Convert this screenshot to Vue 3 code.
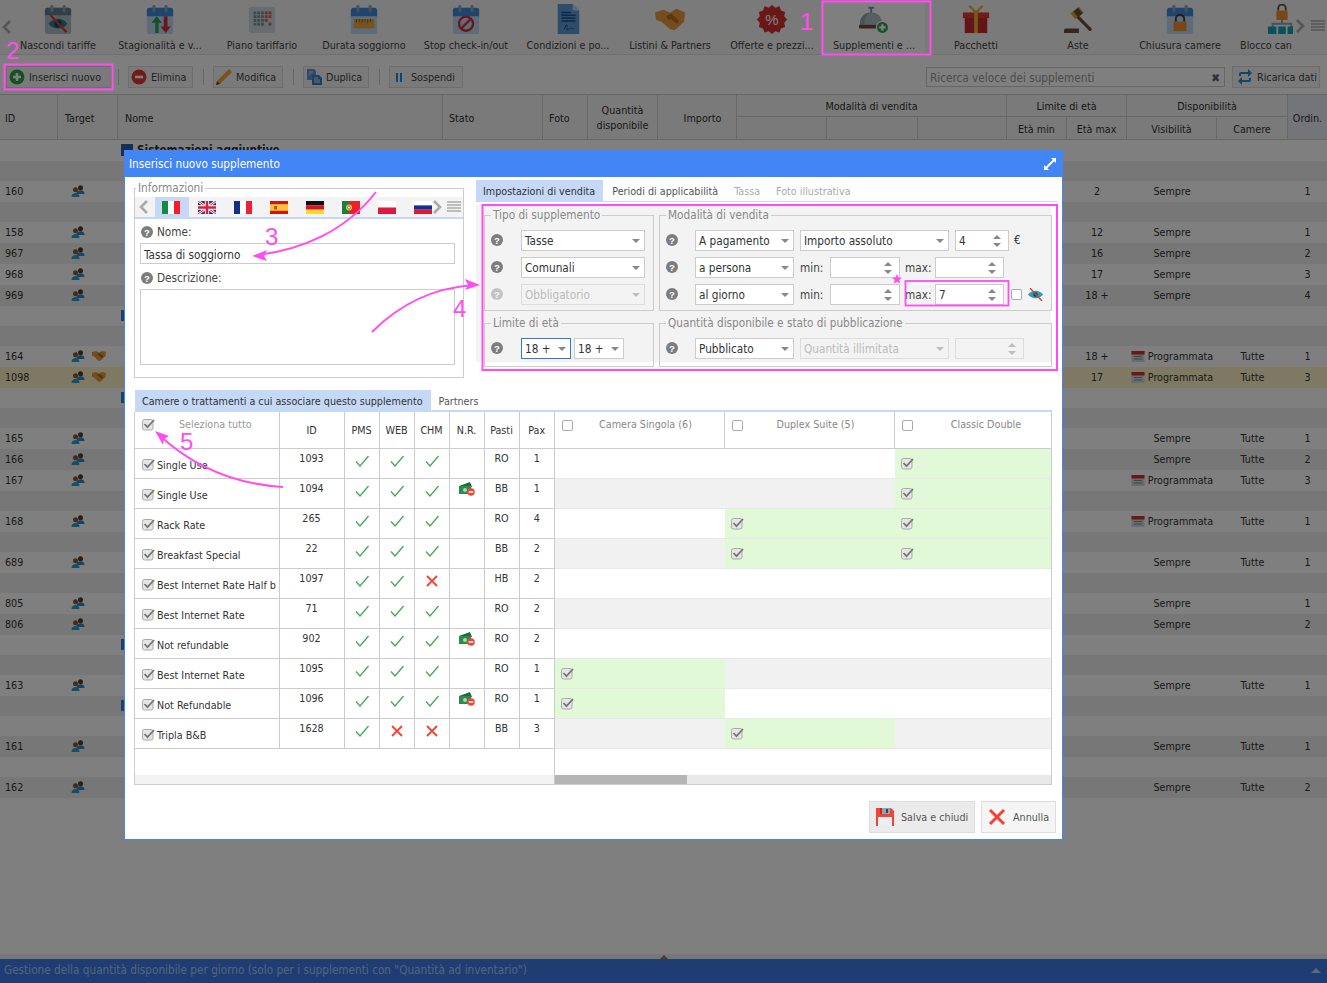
<template>
  <div class="page">
    <!-- icon sprite -->
    <svg class="sprite" aria-hidden="true">
      <defs>
        <symbol id="cal" viewBox="0 0 32 32">
          <rect x="2" y="4" width="28" height="28" rx="3" fill="#bcd9f5" />
          <path d="M2 13V7a3 3 0 0 1 3-3h22a3 3 0 0 1 3 3v6z" fill="#3d8bdc" />
          <rect x="8" y="1" width="3" height="8" rx="1.5" fill="#90a4ae" />
          <rect x="21" y="1" width="3" height="8" rx="1.5" fill="#90a4ae" />
        </symbol>
        <symbol id="i-hide" viewBox="0 0 32 32">
          <rect x="2" y="4" width="28" height="28" rx="3" fill="#b0bec5" />
          <path d="M2 12V7a3 3 0 0 1 3-3h22a3 3 0 0 1 3 3v5z" fill="#607d8b" />
          <rect x="8" y="1" width="3" height="8" rx="1.5" fill="#90a4ae" />
          <rect x="21" y="1" width="3" height="8" rx="1.5" fill="#90a4ae" />
          <path d="M6 21c5-7 15-7 20 0-5 7-15 7-20 0z" fill="#2b7f8e" />
          <circle cx="16" cy="21" r="4" fill="#0d4d5c" />
          <path d="M8 12l17 18" stroke="#e53935" stroke-width="2.4" />
        </symbol>
        <symbol id="i-stag" viewBox="0 0 32 32">
          <use href="#cal" width="32" height="32" />
          <path d="M11 31V20H7l5.500-7 5.500 7h-3.500v11z" fill="#2e9e4f" />
          <path d="M20 13v11h-3.500l5.500 7 5.500-7H24V13z" fill="#d32f2f" />
        </symbol>
        <symbol id="i-grid" viewBox="0 0 32 32">
          <rect x="2" y="3" width="28" height="28" rx="3" fill="#cfd8dc" />
          <g fill="#78909c">
            <rect x="7" y="8" width="3" height="3" /><rect x="11" y="8" width="3" height="3" /><rect x="15" y="8" width="3" height="3" />
            <rect x="7" y="12" width="3" height="3" /><rect x="11" y="12" width="3" height="3" /><rect x="15" y="12" width="3" height="3" />
            <rect x="7" y="16" width="3" height="3" /><rect x="11" y="16" width="3" height="3" /><rect x="15" y="16" width="3" height="3" />
            <rect x="7" y="20" width="3" height="3" /><rect x="11" y="20" width="3" height="3" /><rect x="15" y="20" width="3" height="3" />
          </g>
          <g fill="#d9605a">
            <rect x="19" y="8" width="3" height="3" /><rect x="23" y="8" width="3" height="3" />
            <rect x="19" y="12" width="3" height="3" /><rect x="23" y="12" width="3" height="3" />
            <rect x="19" y="16" width="3" height="3" /><rect x="23" y="20" width="3" height="3" />
          </g>
        </symbol>
        <symbol id="i-dur" viewBox="0 0 32 32">
          <use href="#cal" width="32" height="32" />
          <rect x="5" y="16" width="22" height="10" fill="#f2a63a" />
          <path d="M8 16v4M11 16v3M14 16v4M17 16v3M20 16v4M23 16v3" stroke="#8a5a12" stroke-width="1" />
        </symbol>
        <symbol id="i-stop" viewBox="0 0 32 32">
          <use href="#cal" width="32" height="32" />
          <circle cx="16" cy="21" r="7.500" fill="none" stroke="#d32f2f" stroke-width="2.500" />
          <path d="M11 26l10-10" stroke="#d32f2f" stroke-width="2.500" />
        </symbol>
        <symbol id="i-doc" viewBox="0 0 32 32">
          <path d="M5 0h16l7 7v25H5z" fill="#5b9bd5" />
          <path d="M21 0l7 7h-7z" fill="#b7d6f2" />
          <path d="M9 9h10M9 12h15M9 15h15M9 18h15" stroke="#1b4f8c" stroke-width="1.600" />
          <path d="M12 27c2-6 4-6 3-2s2 2 3 1 2 1 4 0" fill="none" stroke="#1b4f8c" stroke-width="1" />
        </symbol>
        <symbol id="i-hands" viewBox="0 0 32 32">
          <path d="M0 9l9-3 7 3 7-4 9 4-1 10-10 9-5-1-9-8-6-2z" fill="#e89a3c" />
          <path d="M12 13l5-3 9 8-3 3-6-5-3 1z" fill="#b96f1e" />
        </symbol>
        <symbol id="i-offer" viewBox="0 0 32 32">
          <path d="M16 1l3.500 3 4.500-1.500 1.500 4.500 4.500 1.500-1 4.500 3 3.500-3 3.500 1 4.500-4.500 1.500-1.500 4.500-4.500-1.500-3.500 3-3.500-3-4.500 1.500-1.500-4.500-4.500-1.500 1-4.500-3-3.500 3-3.500-1-4.500 4.500-1.500 1.500-4.500 4.500 1.500z" fill="#d32f2f" />
          <text x="16" y="22" font-size="16" fill="#fff" text-anchor="middle" font-family="Liberation Sans, sans-serif">%</text>
        </symbol>
        <symbol id="i-bell" viewBox="0 0 32 32">
          <rect x="10" y="3" width="6" height="2" fill="#78909c" />
          <rect x="12" y="4" width="2" height="6" fill="#78909c" />
          <path d="M1 22C1 14 6 9 13 9s12 5 12 13z" fill="#b0bec5" />
          <path d="M1 22C1 14 6 9 12 9c-5 3-6 7-6 13z" fill="#90a4ae" />
          <rect x="0" y="22" width="26" height="4" rx="1" fill="#6d4c41" />
          <circle cx="25" cy="25" r="7" fill="#fff" />
          <circle cx="25" cy="25" r="5.800" fill="#2e9e4f" />
          <path d="M25 21.500v7M21.500 25h7" stroke="#fff" stroke-width="2.400" />
        </symbol>
        <symbol id="i-gift" viewBox="0 0 32 32">
          <rect x="4" y="10" width="24" height="21" fill="#c62828" />
          <rect x="2" y="9" width="28" height="6" fill="#e53935" />
          <rect x="14" y="9" width="4" height="22" fill="#e8b23a" />
          <path d="M16 9L9 2M16 9l7-7" stroke="#e8b23a" stroke-width="2.500" />
        </symbol>
        <symbol id="i-gavel" viewBox="0 0 32 32">
          <path d="M15 13L29 27" stroke="#6d4c41" stroke-width="3.500" stroke-linecap="round" />
          <path d="M8 10l9-7 5 6-9 7z" fill="#d4a72c" />
          <path d="M11 8l5-4 5 6-5 4z" fill="#6d4c41" />
          <path d="M3 26h14v5H1c0-3 0-5 2-5z" fill="#6d4c41" />
        </symbol>
        <symbol id="i-lock" viewBox="0 0 32 32">
          <use href="#cal" width="32" height="32" />
          <path d="M11.500 19v-3a4.500 4.500 0 0 1 9 0v3" fill="none" stroke="#4e342e" stroke-width="2" />
          <rect x="9" y="19" width="14" height="10" rx="1" fill="#ef8f2b" />
        </symbol>
        <symbol id="i-block" viewBox="0 0 32 32">
          <path d="M12 7V4.500a4 4 0 0 1 8 0V7" fill="none" stroke="#6d4c41" stroke-width="2" />
          <rect x="10" y="7" width="12" height="10" rx="1" fill="#ef8f2b" />
          <path d="M16 17v4M6 25v-4h20v4" fill="none" stroke="#90a4ae" stroke-width="2" />
          <rect x="1" y="24" width="9" height="8" fill="#11a3b8" />
          <rect x="12" y="24" width="8" height="8" fill="#11a3b8" />
          <rect x="22" y="24" width="9" height="8" fill="#11a3b8" />
        </symbol>
        <symbol id="i-plus" viewBox="0 0 16 16">
          <circle cx="8" cy="8" r="7.500" fill="#2e9e4f" />
          <path d="M8 4v8M4 8h8" stroke="#fff" stroke-width="2.600" />
        </symbol>
        <symbol id="i-minus" viewBox="0 0 16 16">
          <circle cx="8" cy="8" r="7.500" fill="#e53935" />
          <path d="M4 8h8" stroke="#fff" stroke-width="2.600" />
        </symbol>
        <symbol id="i-pencil" viewBox="0 0 16 16">
          <path d="M13 0l3 3L4 15l-4 1 1-4z" fill="#f2a63a" />
          <path d="M1 12l3 3-4 1z" fill="#6d4c41" />
        </symbol>
        <symbol id="i-copy" viewBox="0 0 16 16">
          <path d="M1 0h7l2 2v9H1z" fill="#5b9bd5" />
          <path d="M6 6h7l3 3v7H6z" fill="#3d7fc1" />
          <path d="M8 9h4M8 11h6M8 13h6M3 3h4M3 5h2" stroke="#dbe9f7" stroke-width="1" />
        </symbol>
        <symbol id="i-reload" viewBox="0 0 16 16">
          <path d="M2 7V5a2 2 0 0 1 2-2h7V0l4 4-4 4V5H4v2z" fill="#2b86d4" />
          <path d="M14 9v2a2 2 0 0 1-2 2H5v3l-4-4 4-4v3h7V9z" fill="#2b86d4" />
        </symbol>
        <symbol id="check" viewBox="0 0 13 13">
          <rect x="0.500" y="1.500" width="10.500" height="10.500" rx="2" fill="#e6e6e6" stroke="#aaa" />
          <path d="M2.500 6l3 3.200L12 2" fill="none" stroke="#777" stroke-width="1.800" />
        </symbol>
        <symbol id="ok" viewBox="0 0 14 12">
          <path d="M1 6.500l4 4.500L13.500 1" fill="none" stroke="#43a855" stroke-width="1.300" />
        </symbol>
        <symbol id="no" viewBox="0 0 12 12">
          <path d="M1 1l10 10M11 1L1 11" stroke="#f44336" stroke-width="1.800" />
        </symbol>
        <symbol id="money" viewBox="0 0 16 14">
          <path d="M0 4l11-4 2 5L2 9z" fill="#1b6e3a" />
          <rect x="0" y="4" width="12" height="8" fill="#2e8b4f" />
          <circle cx="6" cy="8" r="2" fill="#a6d8b3" />
          <circle cx="12" cy="10" r="3.800" fill="#f44336" />
          <path d="M9.800 10h4.400" stroke="#fff" stroke-width="1.600" />
        </symbol>
        <symbol id="help" viewBox="0 0 12 12">
          <circle cx="6" cy="6" r="6" fill="#7d7d7d" />
          <text x="6" y="9.500" font-size="9.500" font-weight="700" fill="#fff" text-anchor="middle" font-family="Liberation Sans, sans-serif">?</text>
        </symbol>
        <symbol id="people" viewBox="0 0 14 12">
          <circle cx="9.500" cy="2.800" r="2.500" fill="#5b3a1e" />
          <path d="M5.500 9c0-3 2-3.800 4-3.800s4 .8 4 3.800z" fill="#2b86d4" />
          <circle cx="4.500" cy="4.800" r="2.500" fill="#8a5a2b" />
          <path d="M.5 12c0-3 2-4 4-4s4 1 4 4z" fill="#2b9fd4" />
        </symbol>
        <symbol id="shake" viewBox="0 0 14 10">
          <path d="M0 1l4-1 3 1.500L10 0l4 1-.5 4L8 10 6 9.500 2 5.500 0 5z" fill="#e89a3c" />
          <path d="M5 3l2.500-1 4 3.500-1.500 1.500-3-2.500z" fill="#a8651a" />
        </symbol>
        <symbol id="planned" viewBox="0 0 14 12">
          <rect x="0.500" y="1" width="13" height="11" fill="#cfd8dc" />
          <rect x="0.500" y="1" width="13" height="3.500" fill="#d32f2f" />
          <path d="M3 6.500h8M3 9h8" stroke="#78909c" />
        </symbol>
        <symbol id="eye-off" viewBox="0 0 17 13">
          <path d="M1 6.500c4-5 11-5 15 0-4 5-11 5-15 0z" fill="#2b9fb3" />
          <circle cx="8.500" cy="6.500" r="2.300" fill="#0d4d5c" />
          <path d="M3 0l12 13" stroke="#e53935" stroke-width="1.300" />
        </symbol>
        <symbol id="f-it" viewBox="0 0 18 13"><rect width="6" height="13" fill="#14893f" /><rect x="6" width="6" height="13" fill="#fff" /><rect x="12" width="6" height="13" fill="#f11e2b" /></symbol>
        <symbol id="f-uk" viewBox="0 0 18 13">
          <rect width="18" height="13" fill="#26327a" />
          <path d="M0 0l18 13M18 0L0 13" stroke="#fff" stroke-width="2.600" />
          <path d="M0 0l18 13M18 0L0 13" stroke="#d5213a" stroke-width="1" />
          <path d="M9 0v13M0 6.500h18" stroke="#fff" stroke-width="4.400" />
          <path d="M9 0v13M0 6.500h18" stroke="#d5213a" stroke-width="2.600" />
        </symbol>
        <symbol id="f-fr" viewBox="0 0 18 13"><rect width="6" height="13" fill="#16307f" /><rect x="6" width="6" height="13" fill="#fff" /><rect x="12" width="6" height="13" fill="#f01f36" /></symbol>
        <symbol id="f-es" viewBox="0 0 18 13"><rect width="18" height="13" fill="#c8171f" /><rect y="3.200" width="18" height="6.600" fill="#fcc42e" /><rect x="4" y="5" width="3" height="3.500" fill="#b6562b" /></symbol>
        <symbol id="f-de" viewBox="0 0 18 13"><rect width="18" height="4.400" fill="#111" /><rect y="4.400" width="18" height="4.300" fill="#d9141e" /><rect y="8.700" width="18" height="4.300" fill="#fdd835" /></symbol>
        <symbol id="f-pt" viewBox="0 0 18 13"><rect width="18" height="13" fill="#f01f24" /><rect width="7" height="13" fill="#1b7f3a" /><circle cx="7" cy="6.500" r="3" fill="#f4c63d" /><circle cx="7" cy="6.500" r="1.500" fill="#fff" stroke="#1d3f96" stroke-width=".6" /></symbol>
        <symbol id="f-pl" viewBox="0 0 18 13"><rect width="18" height="6.500" fill="#fff" /><rect y="6.500" width="18" height="6.500" fill="#dd1a3d" /></symbol>
        <symbol id="f-ru" viewBox="0 0 18 13"><rect width="18" height="4.400" fill="#fff" /><rect y="4.400" width="18" height="4.300" fill="#0f2f96" /><rect y="8.700" width="18" height="4.300" fill="#e21a2d" /></symbol>
        <symbol id="list" viewBox="0 0 14 12"><path d="M0 1h14M0 4h14M0 7h14M0 10h14" stroke="#aaa" stroke-width="1.500" /></symbol>
        <symbol id="chev-l" viewBox="0 0 10 14"><path d="M8 1L2 7l6 6" fill="none" stroke="#aaa" stroke-width="2.600" /></symbol>
        <symbol id="chev-r" viewBox="0 0 10 14"><path d="M2 1l6 6-6 6" fill="none" stroke="#aaa" stroke-width="2.600" /></symbol>
      </defs>
    </svg>

    <!-- page behind the dialog -->
    <div class="app">
      <div class="toolbar">
        <svg class="nav-left"><use href="#chev-l" /></svg>
        <div class="tools">
          <div v-for="t in tools" :key="t.label" class="tool" :class="{ active: t.active }">
            <svg class="tool-ico" viewBox="0 0 32 32"><use :href="'#' + t.icon" /></svg>
            <span class="tool-label">{{ t.label }}</span>
          </div>
        </div>
        <svg class="nav-right"><use href="#chev-r" /></svg>
        <svg class="nav-list"><use href="#list" /></svg>
      </div>

      <div class="actions">
        <template v-for="(a, i) in actions" :key="a.label">
          <span v-if="i" class="sep"></span>
          <button class="btn" :style="{ width: a.w + 'px' }">
            <svg v-if="a.icon" class="btn-ico"><use :href="'#' + a.icon" /></svg>
            <span v-else class="pause"></span>
            {{ a.label }}
          </button>
        </template>
        <div class="search">Ricerca veloce dei supplementi<span class="search-x">✖</span></div>
        <button class="btn reload"><svg class="btn-ico"><use href="#i-reload" /></svg>Ricarica dati</button>
      </div>

      <div class="grid-head">
        <div class="h r2">ID</div>
        <div class="h r2">Target</div>
        <div class="h r2 left">Nome</div>
        <div class="h r2 left">Stato</div>
        <div class="h r2 left">Foto</div>
        <div class="h r2">Quantità<br />disponibile</div>
        <div class="h r2 imp">Importo</div>
        <div class="h s3">Modalità di vendita</div>
        <div class="h s2">Limite di età</div>
        <div class="h s2">Disponibilità</div>
        <div class="h r2 ord">Ordin.</div>
        <div class="h"></div>
        <div class="h"></div>
        <div class="h"></div>
        <div class="h">Età min</div>
        <div class="h">Età max</div>
        <div class="h">Visibilità</div>
        <div class="h">Camere</div>
      </div>

      <div class="rows">
        <div v-for="(r, i) in rows" :key="i" class="row" :class="{ odd: i % 2, picked: r.picked, tall: r.id || i === 0 }">
          <template v-if="i === 0">
            <span class="c-name"><i class="blue-box"></i><b>Sistemazioni aggiuntive</b></span>
          </template>
          <i v-else-if="r.mark" class="blue-mark"></i>
          <template v-if="r.id">
            <span class="c-id">{{ r.id }}</span>
            <span class="c-target">
              <svg class="mini"><use href="#people" /></svg>
              <svg v-if="r.hands" class="mini"><use href="#shake" /></svg>
            </span>
            <span class="c-max">{{ r.max }}</span>
            <span class="c-vis">
              <svg v-if="r.vis === 'Programmata'" class="mini"><use href="#planned" /></svg>
              {{ r.vis }}
            </span>
            <span class="c-cam">{{ r.cam }}</span>
            <span class="c-ord">{{ r.ord }}</span>
          </template>
        </div>
      </div>

      <div class="status">
        <span class="status-tab"></span>
        Gestione della quantità disponibile per giorno (solo per i supplementi con "Quantità ad inventario")
        <span class="status-up"></span>
      </div>
    </div>

    <div class="backdrop"></div>

    <!-- dialog -->
    <div class="modal">
      <div class="modal-head">
        Inserisci nuovo supplemento
        <svg class="expand" viewBox="0 0 14 14"><path d="M8 1h5v5l-1.800-1.800-7 7L6 13H1V8l1.800 1.800 7-7z" fill="#fff" /></svg>
      </div>

      <div class="modal-top">
        <fieldset class="info">
          <legend>Informazioni</legend>
          <div class="langs">
            <svg class="lang-nav"><use href="#chev-l" /></svg>
            <span v-for="(f, i) in flags" :key="f" class="flag" :class="{ on: i === 0 }">
              <svg class="flag-img"><use :href="'#f-' + f" /></svg>
            </span>
            <svg class="lang-nav next"><use href="#chev-r" /></svg>
            <svg class="lang-list"><use href="#list" /></svg>
          </div>
          <label class="lbl"><svg class="help"><use href="#help" /></svg>Nome:</label>
          <div class="text-in">Tassa di soggiorno</div>
          <label class="lbl lbl-2"><svg class="help"><use href="#help" /></svg>Descrizione:</label>
          <div class="text-area"></div>
        </fieldset>

        <div class="settings">
          <div class="tabs">
            <span class="tab on">Impostazioni di vendita</span>
            <span class="tab">Periodi di applicabilità</span>
            <span class="tab off">Tassa</span>
            <span class="tab off">Foto illustrativa</span>
          </div>
          <div class="sets">
            <fieldset class="set">
              <legend>Tipo di supplemento</legend>
              <div class="ctl-row"><svg class="help wide"><use href="#help" /></svg><span class="sel w124">Tasse</span></div>
              <div class="ctl-row"><svg class="help wide"><use href="#help" /></svg><span class="sel w124">Comunali</span></div>
              <div class="ctl-row"><svg class="help wide dim"><use href="#help" /></svg><span class="sel w124 dis">Obbligatorio</span></div>
            </fieldset>
            <fieldset class="set">
              <legend>Modalità di vendita</legend>
              <div class="ctl-row"><svg class="help wide2"><use href="#help" /></svg><span class="sel w99">A pagamento</span><span class="sel w149">Importo assoluto</span><span class="spin w54">4</span><span class="unit">€</span></div>
              <div class="ctl-row"><svg class="help wide2"><use href="#help" /></svg><span class="sel w99">a persona</span><span class="cap">min:</span><span class="spin w70"></span><span class="cap">max:</span><span class="spin w69"></span></div>
              <div class="ctl-row"><svg class="help wide2"><use href="#help" /></svg><span class="sel w99">al giorno</span><span class="cap">min:</span><span class="spin w70"></span><span class="cap">max:</span><span class="spin w69">7</span><span class="box"></span><svg class="eye"><use href="#eye-off" /></svg></div>
            </fieldset>
            <fieldset class="set low">
              <legend>Limite di età</legend>
              <div class="ctl-row"><svg class="help wide"><use href="#help" /></svg><span class="sel w50 focus">18 +</span><span class="sel w50 tight">18 +</span></div>
            </fieldset>
            <fieldset class="set low">
              <legend>Quantità disponibile e stato di pubblicazione</legend>
              <div class="ctl-row"><svg class="help wide2"><use href="#help" /></svg><span class="sel w99">Pubblicato</span><span class="sel w149 dis">Quantità illimitata</span><span class="spin w69 dis"></span></div>
            </fieldset>
          </div>
        </div>
      </div>

      <div class="tabs lower">
        <span class="tab on">Camere o trattamenti a cui associare questo supplemento</span>
        <span class="tab">Partners</span>
      </div>

      <div class="assoc">
        <div class="assoc-left">
          <table class="rates">
            <colgroup>
              <col class="cn" /><col class="ci" /><col class="cs" /><col class="cs" /><col class="cs" /><col class="cs" /><col class="cs" /><col class="cs" />
            </colgroup>
            <thead>
              <tr>
                <th class="th-name"><svg class="chk"><use href="#check" /></svg><span>Seleziona tutto</span></th>
                <th>ID</th><th>PMS</th><th>WEB</th><th>CHM</th><th>N.R.</th><th>Pasti</th><th>Pax</th>
              </tr>
            </thead>
            <tbody>
              <tr v-for="r in rates" :key="r.id">
                <td class="td-name"><svg class="chk"><use href="#check" /></svg>{{ r.name }}</td>
                <td>{{ r.id }}</td>
                <td v-for="c in r.ch" :key="c.k"><svg v-if="c.v" class="ok"><use href="#ok" /></svg><svg v-else class="no"><use href="#no" /></svg></td>
                <td><svg v-if="r.nr" class="money"><use href="#money" /></svg></td>
                <td>{{ r.meal }}</td>
                <td>{{ r.pax }}</td>
              </tr>
            </tbody>
          </table>
          <div class="scroll-l"></div>
        </div>
        <div class="assoc-right">
          <div class="room-head">
            <div v-for="c in rooms" :key="c" class="room-col"><i class="box"></i><span>{{ c }}</span></div>
          </div>
          <div v-for="(m, i) in matrix" :key="i" class="room-row" :class="{ odd: i % 2 }">
            <div v-for="(on, j) in m" :key="j" class="room-cell" :class="{ on }">
              <svg v-if="on" class="chk"><use href="#check" /></svg>
            </div>
          </div>
          <div class="scroll-r"><i></i></div>
        </div>
      </div>

      <div class="modal-foot">
        <button class="foot-btn save">
          <svg class="foot-ico" viewBox="0 0 18 18">
            <path d="M0 0h15l3 3v15H0z" fill="#f44336" />
            <rect x="4" y="0" width="10" height="6" fill="#90a4ae" />
            <rect x="4" y="0" width="2" height="6" fill="#c62828" />
            <rect x="10" y="1" width="2" height="4" fill="#37474f" />
            <rect x="2" y="9" width="14" height="9" fill="#eceff1" />
          </svg>
          Salva e chiudi
        </button>
        <button class="foot-btn cancel">
          <svg class="foot-ico" viewBox="0 0 18 18"><path d="M2 2l14 14M16 2L2 16" stroke="#f44336" stroke-width="3" /></svg>
          Annulla
        </button>
      </div>
    </div>

    <!-- magenta annotations drawn over the screenshot -->
    <svg class="marks" viewBox="0 0 1327 983">
      <g fill="none" stroke="#ff4df0" stroke-width="2">
        <rect x="822.500" y="1.500" width="108" height="53" />
        <rect x="4.500" y="64.500" width="108" height="25" />
        <rect x="482.500" y="205" width="574.500" height="165" />
        <rect x="905.500" y="281" width="103" height="24.500" stroke-width="1.800" />
        <path d="M376 192C345 232 300 250 258 255" />
        <path d="M372 332C400 304 432 288 474 285" />
        <path d="M283 487C232 484 190 464 158 434" />
      </g>
      <g fill="#ff4df0">
        <path d="M252 256l15-6-3 6 3 5z" />
        <path d="M480 285l-15-6 3 6-3 5z" />
        <path d="M155 431l14 5-5 3-1 6z" />
        <path d="M897 274l1.500 3.500 3.500.3-2.700 2.300.9 3.500-3.200-1.900-3.200 1.900.9-3.500-2.700-2.300 3.500-.3z" />
      </g>
      <g class="nums" fill="#ff4df0">
        <text x="800" y="30">1</text>
        <text x="6" y="59">2</text>
        <text x="265" y="245">3</text>
        <text x="453" y="317">4</text>
        <text x="180" y="450">5</text>
      </g>
    </svg>
  </div>
</template>

<script setup>
const tools = [
  { label: 'Nascondi tariffe', icon: 'i-hide' },
  { label: 'Stagionalità e v...', icon: 'i-stag' },
  { label: 'Piano tariffario', icon: 'i-grid' },
  { label: 'Durata soggiorno', icon: 'i-dur' },
  { label: 'Stop check-in/out', icon: 'i-stop' },
  { label: 'Condizioni e po...', icon: 'i-doc' },
  { label: 'Listini & Partners', icon: 'i-hands' },
  { label: 'Offerte e prezzi...', icon: 'i-offer' },
  { label: 'Supplementi e ...', icon: 'i-bell', active: true },
  { label: 'Pacchetti', icon: 'i-gift' },
  { label: 'Aste', icon: 'i-gavel' },
  { label: 'Chiusura camere', icon: 'i-lock' },
  { label: 'Blocco can', icon: 'i-block' },
]

const actions = [
  { label: 'Inserisci nuovo', icon: 'i-plus', w: 106 },
  { label: 'Elimina', icon: 'i-minus', w: 65 },
  { label: 'Modifica', icon: 'i-pencil', w: 70 },
  { label: 'Duplica', icon: 'i-copy', w: 66 },
  { label: 'Sospendi', icon: '', w: 74 },
]

const row = (id, max, vis, cam, ord, extra = {}) => ({ id, max, vis, cam, ord, ...extra })
const gap = (mark = false) => ({ mark })

// 21px data rows mixed with 20px empty group rows
const rows = [
  gap(), gap(),
  row(160, 2, 'Sempre', '', 1),
  gap(),
  row(158, 12, 'Sempre', '', 1),
  row(967, 16, 'Sempre', '', 2),
  row(968, 17, 'Sempre', '', 3),
  row(969, '18 +', 'Sempre', '', 4),
  gap(true), gap(),
  row(164, '18 +', 'Programmata', 'Tutte', 1, { hands: true }),
  row(1098, 17, 'Programmata', 'Tutte', 3, { hands: true, picked: true }),
  gap(true), gap(),
  row(165, '', 'Sempre', 'Tutte', 1),
  row(166, '', 'Sempre', 'Tutte', 2),
  row(167, '', 'Programmata', 'Tutte', 3),
  gap(),
  row(168, '', 'Programmata', 'Tutte', 1),
  gap(),
  row(689, '', 'Sempre', 'Tutte', 1),
  gap(),
  row(805, '', 'Sempre', '', 1),
  row(806, '', 'Sempre', '', 2),
  gap(true), gap(),
  row(163, '', 'Sempre', 'Tutte', 1),
  gap(true), gap(),
  row(161, '', 'Sempre', 'Tutte', 1),
  gap(),
  row(162, '', 'Sempre', 'Tutte', 2),
]

const flags = ['it', 'uk', 'fr', 'es', 'de', 'pt', 'pl', 'ru']

const ch = (p, w, c) => [{ k: 'p', v: p }, { k: 'w', v: w }, { k: 'c', v: c }]
const rates = [
  { name: 'Single Use', id: 1093, ch: ch(1, 1, 1), meal: 'RO', pax: 1 },
  { name: 'Single Use', id: 1094, ch: ch(1, 1, 1), nr: true, meal: 'BB', pax: 1 },
  { name: 'Rack Rate', id: 265, ch: ch(1, 1, 1), meal: 'RO', pax: 4 },
  { name: 'Breakfast Special', id: 22, ch: ch(1, 1, 1), meal: 'BB', pax: 2 },
  { name: 'Best Internet Rate Half b', id: 1097, ch: ch(1, 1, 0), meal: 'HB', pax: 2 },
  { name: 'Best Internet Rate', id: 71, ch: ch(1, 1, 1), meal: 'RO', pax: 2 },
  { name: 'Not refundable', id: 902, ch: ch(1, 1, 1), nr: true, meal: 'RO', pax: 2 },
  { name: 'Best Internet Rate', id: 1095, ch: ch(1, 1, 1), meal: 'RO', pax: 1 },
  { name: 'Not Refundable', id: 1096, ch: ch(1, 1, 1), nr: true, meal: 'RO', pax: 1 },
  { name: 'Tripla B&B', id: 1628, ch: ch(1, 0, 0), meal: 'BB', pax: 3 },
]

const rooms = ['Camera Singola (6)', 'Duplex Suite (5)', 'Classic Double']
const matrix = [
  [0, 0, 1],
  [0, 0, 1],
  [0, 1, 1],
  [0, 1, 1],
  [0, 0, 0],
  [0, 0, 0],
  [0, 0, 0],
  [1, 0, 0],
  [1, 0, 0],
  [0, 1, 0],
]
</script>

<style>
html, body { margin: 0; background: #fff; }
</style>

<style scoped>
.page {
  position: relative;
  width: 1327px;
  height: 983px;
  overflow: hidden;
  font-family: "DejaVu Sans Condensed", "DejaVu Sans", sans-serif;
  font-stretch: condensed;
  font-size: 10.7px;
  color: #333;
}
.sprite { position: absolute; width: 0; height: 0; }
svg { display: block; }

/* background page */
.app { display: flex; flex-direction: column; height: 983px; background: #fff; }
.toolbar {
  display: flex;
  align-items: center;
  height: 55px;
  flex: none;
  box-sizing: border-box;
  padding-left: 7px;
  background: #f5f5f5;
  border-bottom: 1px solid #e0e0e0;
  position: relative;
}
.nav-left { position: absolute; left: 2px; top: 20px; width: 10px; height: 14px; }
.tools { display: flex; width: 1286px; height: 54px; overflow: hidden; }
.tool {
  flex: 0 0 102px;
  box-sizing: border-box;
  display: flex;
  flex-direction: column;
  align-items: center;
  padding-top: 4px;
  white-space: nowrap;
  color: #444;
}
.tool.active { background: #fff; }
.tool:last-child .tool-label { margin-right: 32px; }
.tool-ico { width: 30px; height: 30px; flex: none; }
.tool-label { margin-top: 4px; line-height: 16px; }
.nav-right { width: 10px; height: 14px; margin: -2px 0 0 2px; flex: none; }
.nav-list { width: 14px; height: 12px; margin: -2px 0 0 6px; flex: none; }

.actions {
  display: flex;
  align-items: center;
  height: 40px;
  flex: none;
  box-sizing: border-box;
  padding: 4px 7px 0 6px;
  background: #fdfdfd;
  border-bottom: 1px solid #d0d0d0;
}
.btn {
  display: flex;
  align-items: center;
  gap: 4px;
  height: 22px;
  box-sizing: border-box;
  padding: 1px 0 0 2px;
  border: 1px solid #ddd;
  background: #f5f5f5;
  font: inherit;
  color: #444;
  white-space: nowrap;
}
.btn-ico { width: 16px; height: 16px; flex: none; margin-top: -1px; }
.pause { margin: 0 5px 0 4px; border-left: 2px solid #2b86d4; border-right: 2px solid #2b86d4; width: 2px; height: 9px; }
.sep { width: 1px; height: 16px; background: #ccc; margin: 0 9px 0 10px; }
.sep:nth-child(2) { margin-left: 6px; }
.search {
  margin-left: auto;
  width: 299px;
  height: 20px;
  box-sizing: border-box;
  border: 1px solid #ccc;
  padding-left: 3px;
  line-height: 20px;
  font-size: 11.7px;
  color: #999;
  background: #fff;
  display: flex;
  justify-content: space-between;
}
.search-x { margin-right: 4px; color: #666; }
.reload { margin-left: 7px; width: 88px; padding-left: 4px; }

.grid-head, .row {
  display: grid;
  grid-template-columns: 58px 60px 325px 100px 45px 70px 79px 90px 91px 89px 60px 60px 90px 71px 39px;
}
.grid-head {
  flex: none;
  grid-template-rows: 22px 23px;
  height: 45px;
  background: #f5f5f5;
}
.h {
  display: flex;
  align-items: center;
  justify-content: center;
  text-align: center;
  line-height: 15px;
  box-sizing: border-box;
  padding-top: 2px;
  border-right: 1px solid #d0d0d0;
  border-bottom: 1px solid #d0d0d0;
}
.h:first-child { justify-content: flex-start; padding-left: 5px; }
.h.left { justify-content: flex-start; padding-left: 6px; }
.h:nth-child(3) { padding-left: 7px; }
.h:nth-child(2) { justify-content: flex-start; padding-left: 7px; }
.h.imp { padding-left: 11px; }
.r2 { grid-row: span 2; }
.s3 { grid-column: span 3; }
.s2 { grid-column: span 2; }
.ord { background: #e6ebf2; border-right: 0; }

.rows { flex: 1; }
.row { height: 20px; background: #fff; align-items: center; position: relative; box-sizing: border-box; padding-bottom: 1px; }
.row.tall { height: 21px; }
.row.odd { background: #eee; }
.row.picked { background: #fef2c8; }
.c-name { grid-column: 3; display: flex; align-items: center; gap: 4px; padding-left: 3px; font-size: 11.7px; }
.blue-box { width: 12px; height: 12px; background: #2b5fb0; }
.blue-mark { position: absolute; left: 121px; top: 4px; width: 10px; height: 11px; background: #3f7ce0; }
.c-id { grid-column: 1; padding-left: 5px; }
.c-target { grid-column: 2; display: flex; gap: 7px; padding-left: 13px; }
.mini { width: 14px; height: 12px; }
.c-max { grid-column: 12; text-align: center; }
.c-vis { grid-column: 13; display: flex; justify-content: center; align-items: center; gap: 3px; }
.c-cam { grid-column: 14; text-align: center; }
.c-ord { grid-column: 15; text-align: center; }

.status {
  flex: none;
  height: 24px;
  line-height: 22px;
  padding-left: 4px;
  font-size: 11.7px;
  color: #a8c8ff;
  background: #3e7ae4;
  position: relative;
}
.status::before {
  content: "";
  position: absolute;
  left: 0;
  right: 0;
  top: -5px;
  height: 5px;
  background: #eee;
}
.status-tab {
  position: absolute;
  left: 659px;
  top: -4px;
  border: 5px solid transparent;
  border-top: 0;
  border-bottom-color: #777;
}
.status-up {
  position: absolute;
  right: 6px;
  top: 9px;
  border: 5px solid transparent;
  border-top: 0;
  border-bottom: 5px solid #c0d0ff;
}

.backdrop { position: absolute; inset: 0; background: rgba(0, 0, 0, 0.5); }

/* dialog */
.modal {
  position: absolute;
  left: 124px;
  top: 150px;
  width: 939px;
  height: 690px;
  box-sizing: border-box;
  background: #fff;
  border: 1px solid #4285f4;
  border-top: 0;
  color: #333;
}
.modal-head {
  display: flex;
  justify-content: space-between;
  align-items: center;
  height: 27px;
  margin: 0 -1px;
  padding: 0 6px 0 5px;
  background: #4285f4;
  color: #fff;
  font-size: 11.7px;
}
.expand { width: 14px; height: 14px; }
.modal-top { display: flex; gap: 12px; height: 213px; padding-left: 9px; }

fieldset { margin: 0; min-width: 0; border: 1px solid #ccc; }
legend { padding: 0 2px; margin-left: 0; font-size: 11.7px; line-height: 14px; color: #888; }

.info {
  width: 330px;
  height: 197px;
  margin-top: 4px;
  box-sizing: border-box;
  padding: 2px 8px 0 0;
  position: relative;
}
.info legend { margin-left: 1px; }
.langs {
  display: flex;
  align-items: center;
  height: 20px;
  margin: 0 -8px 0 0;
  background: #f3f3f3;
  border-bottom: 2px solid #c5d9f7;
  position: relative;
  padding-left: 20px;
}
.flag { flex: 0 0 36px; height: 20px; display: flex; align-items: center; padding-left: 7px; box-sizing: border-box; }
.flag.on { flex-basis: 34px; margin-right: 2px; background: #c5d9f7; padding-left: 7px; }
.flag-img { width: 18px; height: 13px; }
.lang-nav { position: absolute; left: 4px; top: 3px; width: 10px; height: 14px; }
.lang-nav.next { left: 297px; }
.lang-list { position: absolute; left: 312px; top: 4px; width: 14px; height: 12px; }
.lbl { display: flex; align-items: center; gap: 4px; height: 16px; box-sizing: border-box; padding-top: 2px; margin: 4px 0 4px 6px; font-size: 11.7px; color: #444; }
.lbl-2 { margin-top: 5px; }
.help { width: 12px; height: 12px; flex: none; }
.text-in {
  margin-left: 5px;
  width: 315px;
  height: 21px;
  box-sizing: border-box;
  border: 1px solid #ccc;
  padding-left: 3px;
  line-height: 23px;
  font-size: 11.7px;
}
.text-area { margin-left: 5px; width: 315px; height: 76px; box-sizing: border-box; border: 1px solid #ccc; }

.settings { width: 581px; padding-top: 3px; }
.tabs { display: flex; height: 21px; box-sizing: content-box; border-bottom: 1px solid #c5d9f7; }
.tab { padding: 0 7px; line-height: 23px; color: #555; margin-right: 2px; }
.tab.on { background: #c5d9f7; color: #333; padding-right: 8px; }
.tab.off { color: #aaa; }
.sets {
  display: grid;
  grid-template-columns: 170px 393px;
  column-gap: 5px;
  row-gap: 5px;
  margin-top: 3px;
  padding: 3px 4px 4px 8px;
  background: #f3f3f3;
  height: 157px;
  box-sizing: border-box;
  width: 575px;
}
.set {
  padding: 8px 0 5px 6px;
  display: flex;
  flex-direction: column;
  gap: 6px;
  height: 103px;
  box-sizing: border-box;
}
.set.low { height: 51px; padding-bottom: 7px; }
.ctl-row { display: flex; align-items: center; height: 21px; flex: none; }
.help.wide { margin: -2px 18px 0 0; }
.help.wide2 { margin: -2px 17px 0 0; }
.help.dim { opacity: 0.4; }

.sel, .spin, .box { box-sizing: border-box; border: 1px solid #ccc; background: #fff; }
.sel, .spin {
  height: 21px;
  line-height: 21px;
  padding-left: 3px;
  font-size: 11.7px;
  position: relative;
  flex: none;
  margin-right: 6px;
  white-space: nowrap;
}
.sel::after {
  content: "";
  position: absolute;
  right: 4px;
  top: 8px;
  border: 4px solid transparent;
  border-top: 4px solid #888;
  border-bottom: 0;
}
.spin::before, .spin::after {
  content: "";
  position: absolute;
  right: 7px;
  border: 4px solid transparent;
}
.spin::before { top: 4px; border-top: 0; border-bottom: 4px solid #888; }
.spin::after { bottom: 3px; border-bottom: 0; border-top: 4px solid #888; }
.w124 { width: 124px; margin-right: 0; }
.w99 { width: 99px; }
.w149 { width: 149px; }
.w54 { width: 54px; margin-right: 5px; }
.w70 { width: 70px; margin-right: 5px; }
.w69 { width: 69px; margin-right: 0; }
.w50 { width: 50px; margin-right: 3px; }
.dis { background: #f3f3f3; color: #bbb; border-color: #ddd; }
.dis::after, .dis::before { opacity: 0.5; }
.focus { border-color: #2b7bd6; }
.unit { font-size: 11.7px; margin-top: -2px; }
.cap { width: 30px; flex: none; font-size: 11.7px; color: #444; }
.box { display: block; flex: none; width: 11px; height: 11px; border-color: #aaa; border-radius: 2px; }
.ctl-row .box { margin-left: 7px; }
.eye { width: 17px; height: 13px; margin-left: 5px; flex: none; }

.lower { margin: 0 0 0 10px; width: 917px; height: 20px; border-bottom-width: 2px; }
.lower .tab { margin-right: 1px; padding-right: 8px; }
.assoc {
  display: flex;
  margin-left: 9px;
  width: 918px;
  height: 373px;
  box-sizing: border-box;
  border: 1px solid #ccc;
  border-top: 0;
}
.assoc-left { width: 420px; flex: none; position: relative; border-right: 1px solid #ccc; box-sizing: border-box; }
.rates { width: 419px; table-layout: fixed; border-collapse: collapse; font-size: 10.7px; text-align: center; }
.cn { width: 144px; }
.ci { width: 65px; }
.cs { width: 35px; }
.rates th { height: 36px; padding: 0; font-weight: 400; border: 1px solid #ccc; border-top: 0; }
.rates th:first-child, .rates td:first-child { border-left: 0; }
.rates th:last-child, .rates td:last-child { border-right: 0; }
.rates td { height: 30px; padding: 3px 0 0; box-sizing: border-box; vertical-align: top; border: 1px solid #ccc; }
.th-name { text-align: left; position: relative; color: #999; }
.th-name span { position: absolute; left: 44px; top: 6px; }
.th-name .chk { position: absolute; left: 7px; top: 6px; }
.td-name { text-align: left; white-space: nowrap; overflow: hidden; }
.rates .td-name { padding: 10px 0 0 7px; }
.chk { width: 13px; height: 13px; display: inline-block; vertical-align: -2px; }
.td-name .chk { margin: -3px 2px 0 0; }
.ok { width: 14px; height: 12px; margin: 3px auto 0; }
.no { width: 12px; height: 12px; margin: 3px auto 0; }
.money { width: 16px; height: 14px; margin: 0 auto; }
.scroll-l { position: absolute; left: 0; right: 0; bottom: 0; height: 9px; background: #f3f3f3; }

.assoc-right { flex: 1; position: relative; overflow: hidden; }
.room-head { display: grid; grid-template-columns: 170px 170px 170px; height: 36px; border-bottom: 1px solid #ccc; box-sizing: content-box; }
.room-col { position: relative; border-right: 1px solid #ccc; text-align: center; color: #888; padding-top: 6px; padding-left: 12px; }
.room-col:last-child { border-right: 0; }
.room-col .box { position: absolute; left: 7px; top: 8px; }
.room-row { display: grid; grid-template-columns: 170px 170px 170px; height: 30px; box-sizing: border-box; border-bottom: 1px solid #e8e8e8; }
.room-row.odd { background: #f1f1f1; }
.room-cell { padding: 8px 0 0 6px; }
.room-cell.on { background: #e2f9d8; }
.scroll-r { position: absolute; left: 0; right: 0; bottom: 0; height: 9px; background: #e9e9e9; }
.scroll-r i { display: block; width: 132px; height: 9px; background: #b5b5b5; }

.modal-foot { display: flex; justify-content: flex-end; gap: 6px; margin-top: 16px; padding-right: 6px; }
.foot-btn {
  display: flex;
  align-items: center;
  gap: 7px;
  height: 32px;
  box-sizing: border-box;
  padding: 0 0 0 6px;
  border: 1px solid #ddd;
  background: #f5f5f5;
  font: inherit;
  color: #555;
  white-space: nowrap;
}
.foot-btn.save { background: #ebebeb; width: 106px; }
.foot-btn.cancel { width: 75px; }
.foot-ico { width: 18px; height: 18px; flex: none; }

/* annotations */
.marks { position: absolute; inset: 0; width: 1327px; height: 983px; pointer-events: none; }
.nums text { font-family: "Liberation Sans", sans-serif; font-size: 24px; }
</style>
